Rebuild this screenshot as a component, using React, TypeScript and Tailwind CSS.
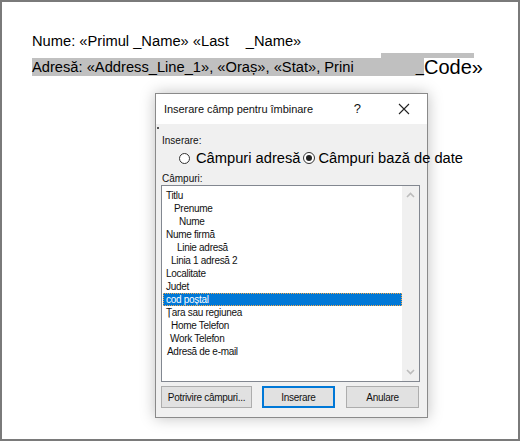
import React from "react";

const items: { t: string; pl: number; sel?: boolean }[] = [
  { t: "Titlu", pl: 3 },
  { t: "Prenume", pl: 11 },
  { t: "Nume", pl: 16 },
  { t: "Nume firmă", pl: 3 },
  { t: "Linie adresă", pl: 14 },
  { t: "Linia 1 adresă 2", pl: 8 },
  { t: "Localitate", pl: 3 },
  { t: "Judet", pl: 3 },
  { t: "cod poștal", pl: 3, sel: true },
  { t: "Țara sau regiunea", pl: 3 },
  { t: "Home Telefon", pl: 8 },
  { t: "Work Telefon", pl: 7 },
  { t: "Adresă de e-mail", pl: 4 },
];

const dlgFont = { fontFamily: '"Liberation Sans", Arial, sans-serif' };

export default function App() {
  return (
    <div className="relative w-[520px] h-[441px] bg-white border-2 border-[#7a7a7a] overflow-hidden" style={dlgFont}>
      <div className="pt-[30px] pl-[30px] text-[14.7px] text-black leading-[18px]">
        <div className="h-[18px]">
          Nume: «Primul _Name» «Last<span className="inline-block w-[17px]"></span>_Name»
        </div>
        <div className="relative mt-[4px] flex items-end h-[22px]">
          <div className="absolute left-[349px] top-[-1px] w-[93px] h-[5px] bg-[#c0c0c0]"></div>
          <div className="bg-[#c0c0c0] h-[18px] w-[392px] flex items-center">
            <span>Adresă: «Address_Line_1», «Oraș», «Stat», Prini</span>
            <span className="ml-auto">_</span>
          </div>
          <span className="text-[20px] leading-[22px] -mb-[2px]">Code»</span>
        </div>
      </div>

      <div className="absolute left-[153px] top-[91px] w-[273px] h-[325px] border border-[#8a8a8a] bg-[#f0f0f0] shadow-[0_0_14px_rgba(0,0,0,0.25)] flex flex-col">
        <div className="h-[30px] bg-white flex items-center pl-[8px] text-[11px] tracking-[-0.05px] text-[#111] shrink-0">
          <span>Inserare câmp pentru îmbinare</span>
          <span className="ml-auto mr-[37px] text-[13px]">?</span>
          <svg width="12" height="12" viewBox="0 0 12 12" className="mr-[17px]">
            <path d="M1 1 L11 11 M11 1 L1 11" stroke="#222" strokeWidth="1.1" />
          </svg>
        </div>
        <div className="flex-1 relative pl-[5px]">
          <div className="absolute left-[1px] top-[3px] w-[2px] h-[2px] bg-[#555]"></div>
          <div className="pt-[10px] pl-[1px] text-[10px] leading-[13px] text-[#111]">Inserare:</div>
          <div className="flex items-center mt-[3px] ml-[18px] text-[14.7px] leading-[16px] text-black whitespace-nowrap w-[320px]">
            <span className="shrink-0 w-[11px] h-[11px] rounded-full border border-[#333] bg-white mr-[6px]"></span>
            <span>Câmpuri adresă</span>
            <span className="shrink-0 w-[12px] h-[12px] rounded-full border border-[#333] bg-white flex items-center justify-center ml-[2px] mr-[4px]">
              <span className="w-[6px] h-[6px] rounded-full bg-[#222]"></span>
            </span>
            <span>Câmpuri bază de date</span>
          </div>
          <div className="mt-[6px] pl-[1px] text-[10px] leading-[13px] text-[#111]">Câmpuri:</div>
          <div className="mt-[0px] w-[259px] h-[197px] border border-[#828790] bg-white flex">
            <div className="flex-1 pt-[3px] pl-[1px] text-[10px] tracking-[-0.3px] text-[#111]">
              {items.map((it) => (
                <div
                  key={it.t}
                  className={
                    "h-[13px] leading-[13px] " +
                    (it.sel ? "bg-[#0078d7] text-white outline outline-1 outline-dotted outline-[#f7a94a] -outline-offset-1" : "")
                  }
                  style={{ paddingLeft: it.pl }}
                >
                  {it.t}
                </div>
              ))}
            </div>
            <div className="w-[17px] bg-[#f0f0f0] flex flex-col items-center justify-between py-[6px]">
              <svg width="9" height="6" viewBox="0 0 9 6">
                <path d="M1 5 L4.5 1.5 L8 5" stroke="#bcbcbc" strokeWidth="1.6" fill="none" />
              </svg>
              <svg width="9" height="6" viewBox="0 0 9 6">
                <path d="M1 1 L4.5 4.5 L8 1" stroke="#bcbcbc" strokeWidth="1.6" fill="none" />
              </svg>
            </div>
          </div>
          <div className="flex mt-[4px] text-[10px] tracking-[-0.3px] text-[#111] whitespace-nowrap">
            <button className="w-[91px] h-[22px] bg-[#e1e1e1] border border-[#adadad] flex items-center justify-center">
              Potrivire câmpuri...
            </button>
            <button className="ml-[10px] w-[73px] h-[22px] bg-[#e1e1e1] border-2 border-[#0078d7] flex items-center justify-center">
              Inserare
            </button>
            <button className="ml-[11px] w-[73px] h-[22px] bg-[#e1e1e1] border border-[#adadad] flex items-center justify-center">
              Anulare
            </button>
          </div>
        </div>
      </div>
    </div>
  );
}
